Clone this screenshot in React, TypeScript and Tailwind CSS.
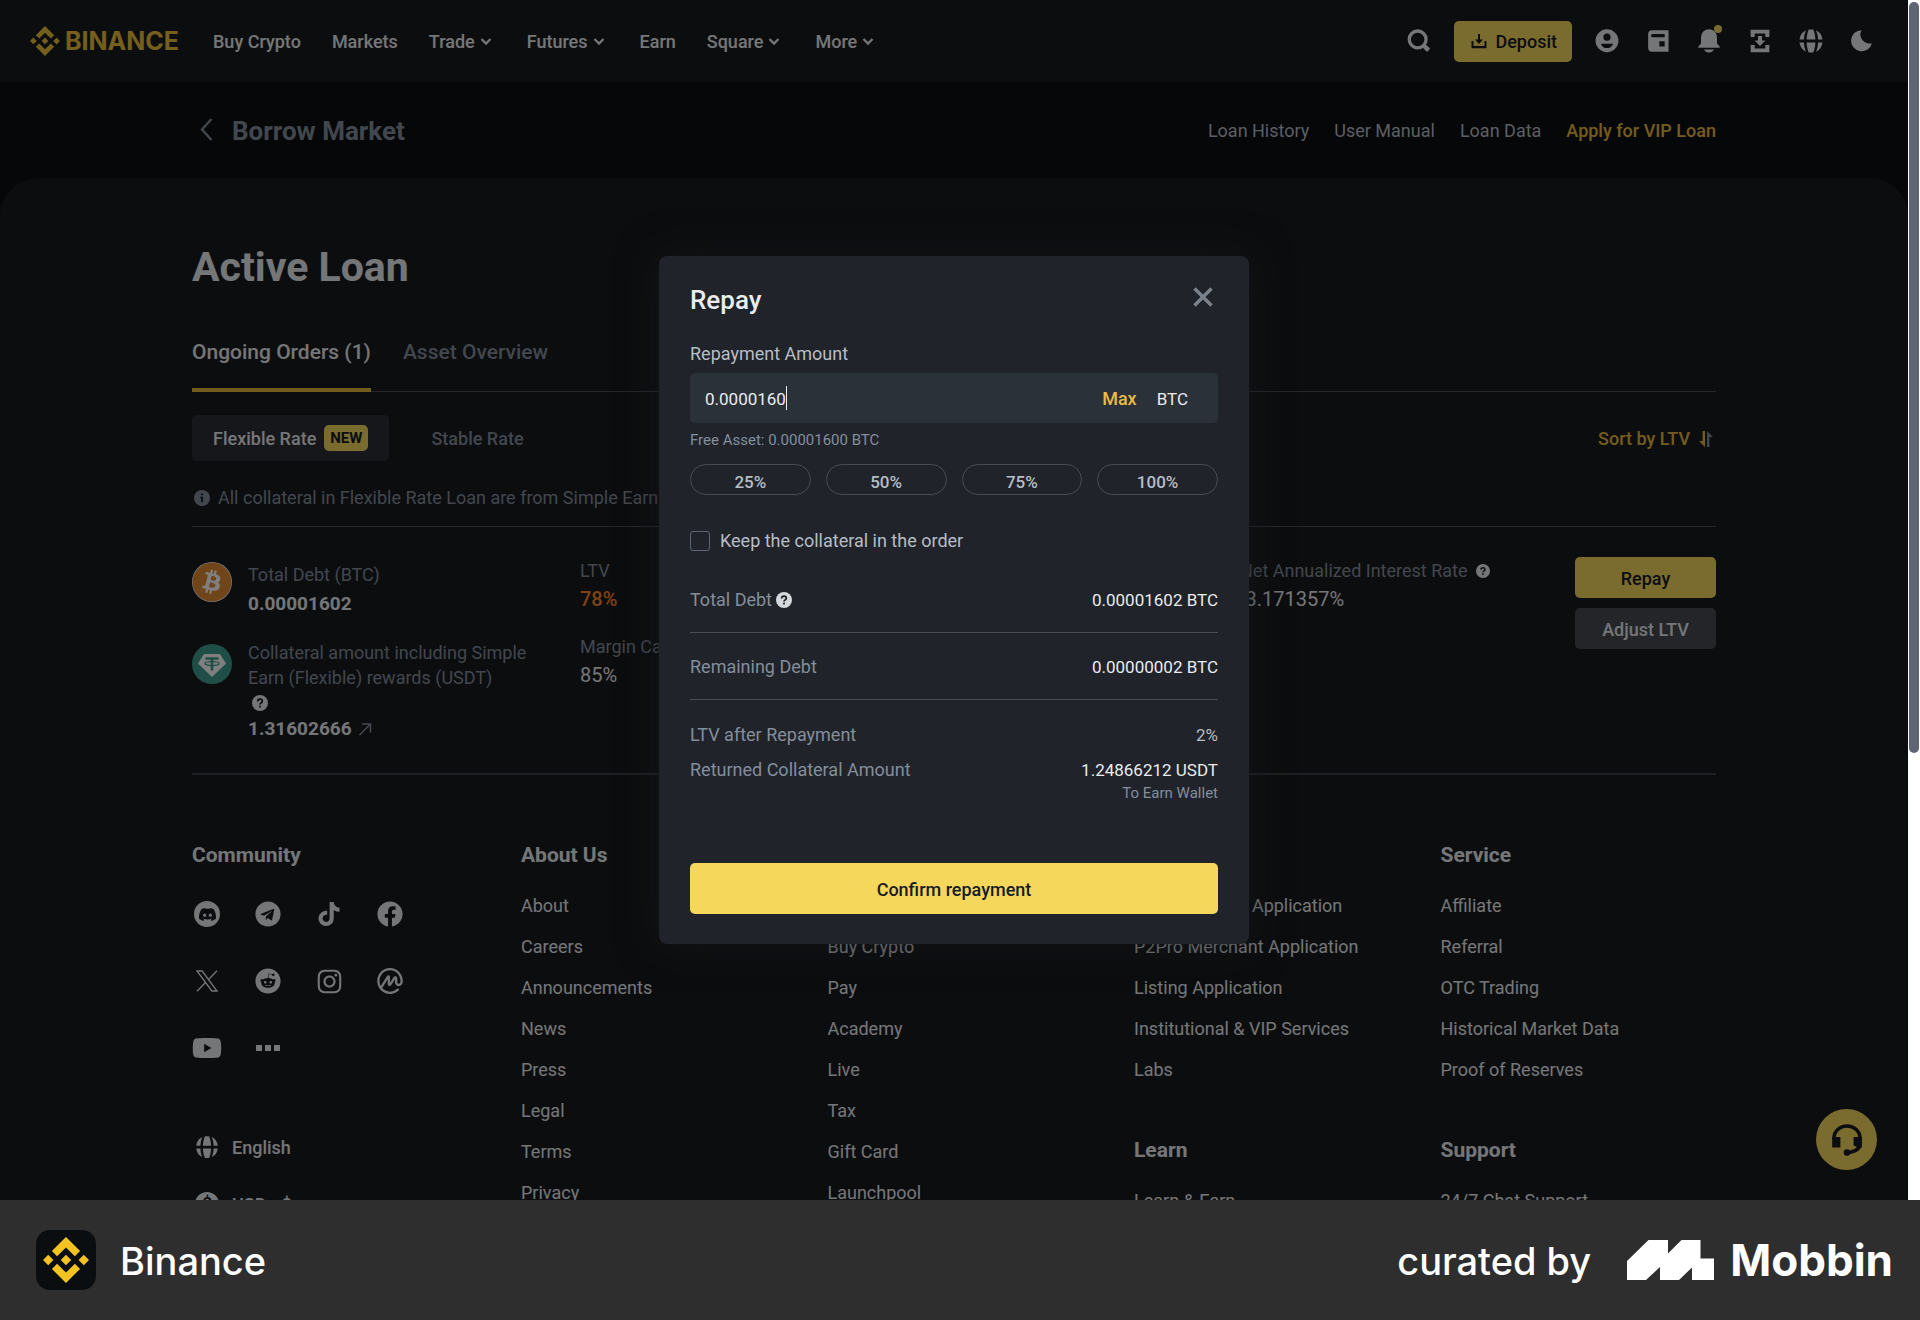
import React, { useState } from "react";
import { FaBitcoin, FaFacebook, FaInstagram, FaReddit, FaTelegram, FaTiktok, FaYoutube } from "react-icons/fa";
import { SiBinance, SiCoinmarketcap, SiDiscord } from "react-icons/si";

const navItems = [
  { label: "Buy Crypto" },
  { label: "Markets" },
  { label: "Trade", menu: true },
  { label: "Futures", menu: true },
  { label: "Earn" },
  { label: "Square", menu: true },
  { label: "More", menu: true },
];

const footerColumns = [
  [
    {
      title: "About Us",
      links: ["About", "Careers", "Announcements", "News", "Press", "Legal", "Terms", "Privacy"],
    },
  ],
  [
    {
      title: "Products",
      links: ["Exchange", "Buy Crypto", "Pay", "Academy", "Live", "Tax", "Gift Card", "Launchpool"],
    },
  ],
  [
    {
      title: "Business",
      links: [
        "P2P Merchant Application",
        "P2Pro Merchant Application",
        "Listing Application",
        "Institutional & VIP Services",
        "Labs",
      ],
    },
    { title: "Learn", links: ["Learn & Earn"] },
  ],
  [
    {
      title: "Service",
      links: ["Affiliate", "Referral", "OTC Trading", "Historical Market Data", "Proof of Reserves"],
    },
    { title: "Support", links: ["24/7 Chat Support"] },
  ],
];

const SearchIcon = () => (
  <svg viewBox="0 0 24 24" className="size-8" fill="none" stroke="currentColor">
    <circle cx="11" cy="10.800" r="6.300" strokeWidth="2.500" />
    <path d="M15.200 15l4 4" strokeWidth="3.400" />
  </svg>
);

const UserIcon = () => (
  <svg viewBox="0 0 24 24" className="size-8" fill="currentColor" fillRule="evenodd">
    <path d="M12 3.200a8.600 8.600 0 100 17.200 8.600 8.600 0 000-17.200zm0 3.200a2.700 2.700 0 110 5.400 2.700 2.700 0 010-5.400zM7.500 14h9a4.700 4.700 0 01-9 0z" />
  </svg>
);

const WalletIcon = () => (
  <svg viewBox="0 0 24 24" className="size-8" fill="currentColor" fillRule="evenodd">
    <path d="M7.600 4h12.300v16H7.600a3 3 0 01-3-3V7a3 3 0 013-3zm.4 2.800a1.200 1.200 0 000 2.400h9V6.800zM13 12.200v4h4v-4z" />
  </svg>
);

const BellIcon = () => (
  <svg viewBox="0 0 24 24" className="size-8" fill="currentColor">
    <path d="M12 3.200a6 6 0 00-6 6v4.600l-2 2.300V17h16v-.9l-2-2.300V9.200a6 6 0 00-6-6zM8.200 18.400h7.600a4.300 4.300 0 01-7.600 0z" />
  </svg>
);

const DownloadBoxIcon = () => (
  <svg viewBox="0 0 24 24" className="size-8" fill="currentColor">
    <path d="M5 3.500h14V9h-3V6.400H8V9H5zM5 20.500h14V15h-3v2.600H8V15H5zM10.500 8.200h3v3.500H16l-4 4-4-4h2.500z" />
  </svg>
);

const GlobeIcon = ({ className = "size-8" }: { className?: string }) => (
  <svg viewBox="0 0 24 24" className={className} fill="currentColor">
    <path d="M10.300 3.300h3.400c.9 2.200 1.500 4.800 1.600 7.600H8.700c.1-2.800.7-5.400 1.600-7.600zM8.200 4A17 17 0 006.700 10.900H3.400a8.700 8.700 0 014.800-6.900zM15.800 4a17 17 0 011.500 6.900h3.300A8.700 8.700 0 0015.800 4zM10.300 20.700h3.400c.9-2.200 1.500-4.800 1.600-7.600H8.700c.1 2.800.7 5.400 1.600 7.600zM8.200 20a17 17 0 01-1.500-6.900H3.400A8.700 8.700 0 008.200 20zM15.800 20a17 17 0 001.500-6.900h3.300a8.700 8.700 0 01-4.800 6.900z" />
  </svg>
);

const MoonIcon = () => (
  <svg viewBox="0 0 24 24" className="size-8" fill="currentColor">
    <path d="M11.600 3.900A7.900 7.900 0 1019.400 13.600 6.800 6.800 0 0111.600 3.900z" />
  </svg>
);

const BackIcon = () => (
  <svg viewBox="0 0 30 30" className="size-[30px]" fill="none" stroke="currentColor" strokeWidth="2.400">
    <path d="M19.500 4L10 14.500 19.500 25" />
  </svg>
);

const MenuArrow = () => (
  <svg viewBox="0 0 20 20" className="size-5" fill="none" stroke="currentColor" strokeWidth="2.300">
    <path d="M5.500 7l4.500 4.500L14.500 7" />
  </svg>
);

const CloseIcon = () => (
  <svg viewBox="0 0 30 30" className="size-[30px]" fill="none" stroke="currentColor" strokeWidth="3.400">
    <path d="M6.500 6.500l17 17M23.500 6.500l-17 17" />
  </svg>
);

const QuestionIcon = ({ className = "size-4" }: { className?: string }) => (
  <svg viewBox="0 0 18 18" className={className} fill="currentColor">
    <circle cx="9" cy="9" r="9" />
    <path
      d="M6.400 7.300a2.600 2.600 0 115.200 0c0 1.500-2.600 1.700-2.600 3.400"
      fill="none"
      stroke="#181a20"
      strokeWidth="1.900"
    />
    <rect x="8" y="12" width="2" height="2" fill="#181a20" />
  </svg>
);

const InfoIcon = () => (
  <svg viewBox="0 0 18 18" className="size-4" fill="currentColor">
    <circle cx="9" cy="9" r="9" />
    <path d="M8 3.800h2.200v2.100H8zM7 7.600h3.200v6.200H8V9.400H7z" fill="#181a20" />
  </svg>
);

const DiscordIcon = () => (
  <span className="flex size-[26px] items-center justify-center rounded-full bg-[#eaecef]">
    <SiDiscord size={17} className="text-[#181a20]" />
  </span>
);

const XLogo = () => (
  <svg viewBox="0 0 24 24" className="size-6" fill="none" stroke="currentColor" strokeWidth="1.300">
    <path d="M2 2h5.200L22 22h-5.200zM22 1.800L13.600 10.500M10.500 13.500L2 22.200" />
  </svg>
);

const TetherIcon = () => (
  <svg viewBox="0 0 40 40" className="size-10 shrink-0">
    <circle cx="20" cy="20" r="20" fill="#3f9c8c" />
    <path d="M12 10h16l6 9.500L20 33 6 19.500z" fill="#fff" />
    <g fill="none" stroke="#3f9c8c">
      <path d="M13.500 14.500h13M20 14v12.500" strokeWidth="2.600" />
      <ellipse cx="20" cy="19.600" rx="7.200" ry="1.900" strokeWidth="1.300" />
    </g>
  </svg>
);

const HeadsetIcon = () => (
  <svg viewBox="0 0 30 32" className="h-8 w-[30px]" fill="#181a20">
    <path d="M2 15v-1a13 12 0 0126 0v6c0 4.500-5 7.500-12 8.700" fill="none" stroke="#181a20" strokeWidth="3.600" />
    <path d="M.2 13h8.200v10.500H.200zM21.600 13h8.200v10.500h-3.400l-4.800-2z" />
    <circle cx="15" cy="28.600" r="3.300" />
  </svg>
);

const Header = () => (
  <header className="flex h-[82px] shrink-0 items-center justify-between bg-[#181b1f] px-[30px] text-[#eaecef]">
    <div className="flex items-center gap-[30px]">
      <a href="#home" className="flex w-[153px] items-center gap-[5px] text-[#e8be3a]">
        <SiBinance size={30} />
        <span className="font-[Inter,sans-serif] text-[25px] font-bold">BINANCE</span>
      </a>
      <nav className="flex items-center gap-[31px] pt-[2px] font-medium">
        {navItems.map((item) => (
          <a key={item.label} href="#nav" className="flex items-center gap-px">
            {item.label}
            {item.menu && <MenuArrow />}
          </a>
        ))}
      </nav>
    </div>
    <div className="flex items-center gap-[19px]">
      <button aria-label="Search">
        <SearchIcon />
      </button>
      <button className="flex h-[41px] items-center gap-[6px] rounded-[5px] bg-[#f5d75c] px-[15px] font-medium text-[#181b1f]">
        <svg viewBox="0 0 20 20" className="size-5" fill="currentColor">
          <path d="M2.500 10h2v5h11v-5h2v7.200h-15zM9 3h2v5.500h3L10 13 6 8.500h3z" />
        </svg>
        <span className="pt-[2px]">Deposit</span>
      </button>
      <button aria-label="Account">
        <UserIcon />
      </button>
      <button aria-label="Wallet">
        <WalletIcon />
      </button>
      <button aria-label="Notifications" className="relative">
        <BellIcon />
        <span className="absolute top-0 right-[3px] size-2 rounded-full bg-[#f5d75c]"></span>
      </button>
      <button aria-label="Downloads">
        <DownloadBoxIcon />
      </button>
      <button aria-label="Language">
        <GlobeIcon />
      </button>
      <button aria-label="Theme">
        <MoonIcon />
      </button>
    </div>
  </header>
);

const LoanRow = () => (
  <div className="flex items-start border-b-2 border-[#3b4048] pt-[30px] pb-[30px] text-[#848e9c]">
    <div className="mt-[5px] flex w-[388px] flex-col gap-[22px]">
      <div className="flex gap-4">
        <span className="size-10 shrink-0 rounded-full bg-white">
          <FaBitcoin size={40} className="text-[#e08a35]" />
        </span>
        <div>
          <p className="leading-[26px]">Total Debt (BTC)</p>
          <p className="mt-[2px] text-[19px] leading-7 font-bold text-[#eaecef]">0.00001602</p>
        </div>
      </div>
      <div className="flex gap-4">
        <div className="mt-1">
          <TetherIcon />
        </div>
        <div className="max-w-[290px]">
          <p className="leading-[25px]">Collateral amount including Simple Earn (Flexible) rewards (USDT)</p>
          <div className="flex h-[25px] items-center pl-1 text-[#eaecef]">
            <QuestionIcon />
          </div>
          <p className="flex items-center gap-[6px] text-[19px] leading-7 font-bold text-[#eaecef]">
            1.31602666
            <svg viewBox="0 0 14 14" className="size-[14px] text-[#848e9c]" fill="none" stroke="currentColor" strokeWidth="1.600">
              <path d="M4 2h8.500v8.500M12.500 2L1.500 13" />
            </svg>
          </p>
        </div>
      </div>
    </div>
    <div className="flex flex-1 flex-col gap-5">
      <div>
        <p className="leading-7">LTV</p>
        <p className="text-xl leading-7 font-medium text-[#f7862c]">78%</p>
      </div>
      <div>
        <p className="leading-7">Margin Call</p>
        <p className="text-xl leading-7 text-[#eaecef]">85%</p>
      </div>
    </div>
    <div className="w-[335px]">
      <p className="flex items-center gap-2 leading-7">
        Net Annualized Interest Rate <QuestionIcon className="size-[14px] text-[#eaecef]" />
      </p>
      <p className="text-xl leading-7 text-[#eaecef]">-3.171357%</p>
    </div>
    <div className="flex w-[141px] flex-col gap-[10px] font-medium">
      <button className="h-[41px] rounded-[5px] bg-[#f5d75c] pt-[2px] text-[#181b1f]">Repay</button>
      <button className="h-[41px] rounded-[5px] bg-[#474a51] pt-[2px] text-[#eaecef]">Adjust LTV</button>
    </div>
  </div>
);

const SiteFooter = () => (
  <footer className="flex pt-[66px] text-[#eaecef]">
    <div className="w-[329px] shrink-0">
      <h3 className="text-[21px] leading-7 font-bold">Community</h3>
      <div className="mt-[30px] grid w-fit grid-cols-4 gap-x-[31px] gap-y-[37px]">
        {[
          { name: "Discord", icon: <DiscordIcon /> },
          { name: "Telegram", icon: <FaTelegram size={26} /> },
          { name: "TikTok", icon: <FaTiktok size={24} /> },
          { name: "Facebook", icon: <FaFacebook size={26} /> },
          { name: "X", icon: <XLogo /> },
          { name: "Reddit", icon: <FaReddit size={26} /> },
          { name: "Instagram", icon: <FaInstagram size={27} /> },
          { name: "CoinMarketCap", icon: <SiCoinmarketcap size={26} /> },
          { name: "YouTube", icon: <FaYoutube size={30} /> },
        ].map((s) => (
          <a key={s.name} href="#social" aria-label={s.name} className="flex size-[30px] items-center justify-center">
            {s.icon}
          </a>
        ))}
        <button aria-label="More communities" className="flex size-[30px] items-center justify-center gap-[3px]">
          <span className="size-[6px] bg-[#eaecef]"></span>
          <span className="size-[6px] bg-[#eaecef]"></span>
          <span className="size-[6px] bg-[#eaecef]"></span>
        </button>
      </div>
      <button className="mt-[69px] flex h-[30px] items-center gap-[10px] font-medium">
        <GlobeIcon className="size-[30px]" />
        <span className="pt-[2px]">English</span>
      </button>
      <button className="mt-[27px] flex h-[30px] items-center gap-[10px] font-medium">
        <span className="flex size-[30px] items-center justify-center">
          <span className="flex size-6 items-center justify-center rounded-full bg-[#eaecef] text-[#181b1f]">$</span>
        </span>
        <span className="pt-[2px]">USD - $</span>
      </button>
    </div>
    <div className="grid flex-1 grid-cols-4 gap-x-[31px]">
      {footerColumns.map((column, i) => (
        <div key={i} className="flex flex-col gap-[46px]">
          {column.map((group) => (
            <div key={group.title}>
              <h3 className="text-[21px] leading-7 font-bold">{group.title}</h3>
              <ul className="mt-4 whitespace-nowrap">
                {group.links.map((link) => (
                  <li key={link} className="leading-[41px]">
                    <a href="#footer">{link}</a>
                  </li>
                ))}
              </ul>
            </div>
          ))}
        </div>
      ))}
    </div>
  </footer>
);

const RepayModal = () => {
  const [amount, setAmount] = useState("0.0000160");
  const [keep, setKeep] = useState(false);

  return (
    <div
      role="dialog"
      aria-label="Repay"
      className="w-[590px] rounded-lg bg-[#202329] px-[31px] pt-[26px] pb-[30px] text-[#848e9c] shadow-[0_0_40px_rgba(24,26,30,0.6)]"
    >
      <div className="flex items-start justify-between">
        <h2 className="text-[26px] leading-9 font-medium text-[#eaecef]">Repay</h2>
        <button aria-label="Close" className="text-[#7c828b]">
          <CloseIcon />
        </button>
      </div>

      <label htmlFor="repay-amount" className="mt-6 block leading-6 text-[#b7bdc6]">
        Repayment Amount
      </label>
      <div className="mt-[7px] flex h-[50px] items-center rounded-[5px] bg-[#2b3139] pr-[30px] pl-[15px]">
        <div className="flex flex-1 items-center">
          <input
            id="repay-amount"
            type="text"
            className="field-sizing-content pt-[2px] text-[17px] text-[#eaecef] outline-none"
            value={amount}
            onChange={(e) => setAmount(e.target.value)}
          />
          <span className="h-6 w-px bg-[#eaecef]"></span>
        </div>
        <button className="pt-[2px] font-medium text-[#e9bb45]" onClick={() => setAmount("0.00001600")}>
          Max
        </button>
        <span className="ml-5 pt-[2px] text-[17px] text-[#eaecef]">BTC</span>
      </div>
      <p className="mt-[6px] text-[15px] leading-[22px]">Free Asset: 0.00001600 BTC</p>

      <div className="mt-[13px] grid grid-cols-4 gap-[15px]">
        {["25%", "50%", "75%", "100%"].map((p) => (
          <button
            key={p}
            className="h-[31px] rounded-full border border-[#474d57] pt-1 text-[17px] leading-6 font-medium text-[#b7bdc6]"
          >
            {p}
          </button>
        ))}
      </div>

      <label className="mt-[34px] flex items-center gap-[10px] leading-6 text-[#b7bdc6]">
        <input
          type="checkbox"
          className="size-5 appearance-none rounded-[3px] border border-[#5e6673] checked:bg-[#f5d75c]"
          checked={keep}
          onChange={(e) => setKeep(e.target.checked)}
        />
        Keep the collateral in the order
      </label>

      <div className="mt-[35px] flex items-center justify-between border-b border-[#474d57] pb-5 leading-6">
        <span className="flex items-center gap-1">
          Total Debt <QuestionIcon className="size-4 text-[#d5d8dc]" />
        </span>
        <span className="text-[17px] text-[#eaecef]">0.00001602 BTC</span>
      </div>
      <div className="mt-[22px] flex items-center justify-between border-b border-[#474d57] pb-5 leading-6">
        <span>Remaining Debt</span>
        <span className="text-[17px] text-[#eaecef]">0.00000002 BTC</span>
      </div>
      <div className="mt-[23px] flex items-center justify-between leading-6">
        <span>LTV after Repayment</span>
        <span className="text-[17px] text-[#b7bdc6]">2%</span>
      </div>
      <div className="mt-[11px] flex items-center justify-between leading-6">
        <span>Returned Collateral Amount</span>
        <span className="text-[17px] text-[#eaecef]">1.24866212 USDT</span>
      </div>
      <p className="text-right text-[15px] leading-[22px]">To Earn Wallet</p>

      <button className="mt-[59px] h-[51px] w-full rounded-[5px] bg-[#f5d75c] pt-[2px] font-medium text-[#181b1f]">
        Confirm repayment
      </button>
    </div>
  );
};

const App = () => {
  return (
    <div className="flex h-screen flex-col overflow-hidden font-[Roboto,sans-serif] text-lg">
      <div className="flex min-h-0 flex-1">
        <div className="relative flex-1 overflow-hidden bg-[#0b0e11]">
          <Header />

          <div className="mx-auto flex h-[96px] max-w-[1524px] items-center justify-between text-[#b7bdc6]">
            <a href="#borrow" className="flex items-center gap-[10px] text-[26px] font-bold text-[#848e9c]">
              <BackIcon />
              <span className="pt-[2px]">Borrow Market</span>
            </a>
            <nav className="flex gap-[25px] pt-[2px]">
              <a href="#history">Loan History</a>
              <a href="#manual">User Manual</a>
              <a href="#data">Loan Data</a>
              <a href="#vip" className="font-medium text-[#e9b93c]">
                Apply for VIP Loan
              </a>
            </nav>
          </div>

          <main className="rounded-t-[38px] bg-[#181b1f] pt-16">
            <div className="mx-auto max-w-[1524px]">
              <h1 className="text-[41px] leading-[50px] font-bold text-[#eaecef]">Active Loan</h1>

              <div className="mt-11 flex gap-8 border-b border-[#474d57] text-[21px] font-medium">
                <button className="-mb-px border-b-4 border-[#e9b93c] pb-5 leading-8 text-[#eaecef]">
                  Ongoing Orders (1)
                </button>
                <button className="-mb-px border-b-4 border-transparent pb-5 leading-8 text-[#848e9c]">
                  Asset Overview
                </button>
              </div>

              <div className="mt-[23px] flex items-center justify-between font-medium">
                <div className="flex items-center gap-[21px]">
                  <button className="flex h-[46px] items-center gap-2 rounded-[5px] bg-[#2b2e36] px-[21px] text-[#eaecef]">
                    <span className="pt-[2px]">Flexible Rate</span>
                    <span className="rounded-[5px] bg-[#f5d75c] px-[6px] text-[15px] leading-[26px] font-bold text-[#181b1f]">
                      NEW
                    </span>
                  </button>
                  <button className="h-[46px] px-[21px] pt-[2px] text-[#848e9c]">Stable Rate</button>
                </div>
                <button className="flex items-center gap-[6px] pt-[2px] text-[#e9b93c]">
                  Sort by LTV
                  <svg viewBox="0 0 20 20" className="size-5">
                    <path d="M9 2v16l-6-6h3.600V2z" fill="#e9b93c" />
                    <path d="M11 18V2l6 6h-3.600v10z" fill="#848e9c" />
                  </svg>
                </button>
              </div>

              <p className="mt-6 flex items-center gap-2 border-b border-[#474d57] pb-[15px] pl-[2px] leading-[26px] text-[#848e9c]">
                <InfoIcon />
                All collateral in Flexible Rate Loan are from Simple Earn
              </p>

              <LoanRow />
              <SiteFooter />
            </div>
          </main>

          <button
            aria-label="Chat support"
            className="absolute right-[31px] bottom-[30px] flex size-[61px] items-center justify-center rounded-full bg-[#f5d75c]"
          >
            <HeadsetIcon />
          </button>

          <div className="absolute inset-0 flex items-center justify-center bg-black/50">
            <RepayModal />
          </div>
        </div>

        <div className="w-3 bg-white px-px pt-[2px]">
          <div className="h-[751px] rounded-full bg-[#5f6572]"></div>
        </div>
      </div>

      <div className="flex h-[120px] shrink-0 items-center justify-between bg-[#2e2e2e] pr-[27px] pl-9 font-[Inter,sans-serif] text-[38px] text-white">
        <div className="flex items-center gap-6">
          <span className="flex size-[60px] items-center justify-center rounded-[14px] bg-[#0b0e11]">
            <SiBinance size={46} className="text-[#f3c321]" />
          </span>
          <span className="pt-1 font-medium">Binance</span>
        </div>
        <div className="flex items-center">
          <span className="pt-1 font-medium">curated by</span>
          <svg viewBox="0 0 87 40" className="mr-4 ml-9 h-10 w-[87px]" fill="#fff">
            <path d="M0 21L21.500 0H41v13.500L54.500 0H73.500v18.500H87V40H65V27.500L52 40H33V27L19 40H0z" />
          </svg>
          <span className="text-[44px] font-bold">Mobbin</span>
        </div>
      </div>
    </div>
  );
};

export default App;
